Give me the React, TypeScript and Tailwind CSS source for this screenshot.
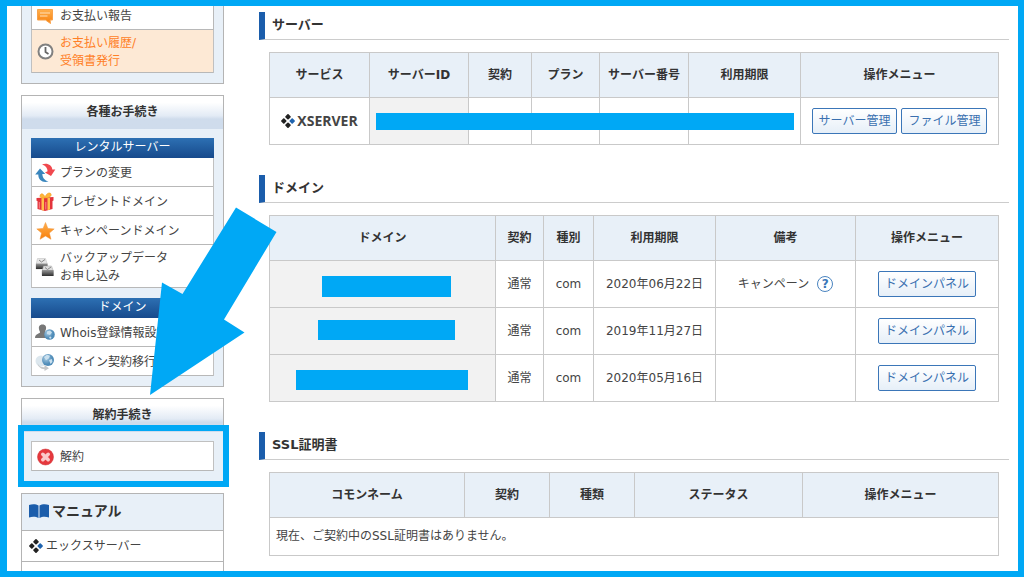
import type { ReactNode } from "react";

type IconName = "speech" | "clock" | "refresh" | "gift" | "star" | "backup" | "whois" | "transfer" | "cancel";

type MenuItem = { icon: IconName; lines: string[]; active?: boolean };

const icons: Record<IconName, ReactNode> = {
  speech: (
    <>
      <path d="M1.500 2.500h15v10.500h-2.500l.5 3.500-5-3.500h-8z" fill="url(#orange)" stroke="#f9a24a" strokeWidth="1" strokeLinejoin="round" />
      <path d="M4 6h10M4 9h7.500" stroke="#ffe0b8" strokeWidth="1" />
    </>
  ),
  clock: (
    <>
      <circle cx="9.500" cy="8.500" r="7" fill="#fff" stroke="#808080" strokeWidth="2" />
      <path d="M9.500 4v5l3 2" fill="none" stroke="#666" strokeWidth="1.800" />
    </>
  ),
  refresh: (
    <>
      <path d="M6 .5C11-1.500 16 1 16.300 5.500H19.300L15 12 9 8.500l2.600-1.300C11.500 4 9.500 1.700 6 .5z" fill="#f0484e" />
      <path d="M12.500 17.500C7 19 2.300 16.500 2.300 10.500H-.8L4 4.500 9.300 10H6.300C6.500 13.500 8.500 16.500 12.500 17.500z" fill="#3a86bd" />
    </>
  ),
  gift: (
    <>
      <path d="M.5 5 17.500 4v3.500l-1 .5v8L9 18 1.500 16V8l-1-.3z" fill="#e3343c" />
      <path d="M5.500 5H8v12.700l-2.500-.6zM11.500 5h2.500v11.500l-2.500.7z" fill="#ffc04a" />
      <path d="M9 5C5 5.500 3 4 4.500 1.500 6-.5 8.500 2 9 4.500c.8-3.500 4-5.500 5.700-4C16.500 3 13 5 9 5z" fill="#ffb638" stroke="#f19a22" strokeWidth=".6" />
      <path d="M3.300 9v6.500M9.800 9v7.500" stroke="#f7868b" strokeWidth="1" />
    </>
  ),
  star: (
    <path d="m9.500.5 2.400 5.900 6.300.5-4.800 4.200 1.600 6.200-5.500-3.300L4 17.300l1.600-6.200L.8 6.900l6.300-.5z" fill="url(#orange)" stroke="#f1953a" strokeWidth=".5" />
  ),
  backup: (
    <>
      <path d="M1.500.5h8l2 6.500v4H0V7z" fill="#e6e6e6" stroke="#bbb" strokeWidth=".5" />
      <path d="M0 5.500h11.500V11H0z" fill="url(#metal)" />
      <path d="M7.500 8h8l2 5.500v4H6v-4z" fill="#dcdcdc" stroke="#a5a5a5" strokeWidth=".5" />
      <path d="M6 12h11.500v6H6z" fill="url(#metal)" />
      <path d="m3 2 2.500 2L9 1.500M9 9.500l2.500 2 3.500-2.500" fill="none" stroke="#888" strokeWidth="1" />
    </>
  ),
  whois: (
    <>
      <path d="M6.500.5c3 0 4 2.200 3.500 4.500-.3 1.500-1 2.200-1 3.500 1 1.300 3.500 1.300 4 5.500H-1C-.8 9.800 3 9.800 4 8.500 4 7.200 3 6.500 3 5 2.500 2.700 3.500.5 6.500.5z" fill="#777" />
      <circle cx="13.500" cy="10.500" r="5.300" fill="url(#globe)" />
      <path d="m11 7.500 3-1 2 2-2 2.500-3-1zM13 13l2-.5.500 1.500-1.500 1z" fill="#c9e0ef" />
    </>
  ),
  transfer: (
    <>
      <circle cx="5" cy="8" r="5.500" fill="#dce7ee" />
      <circle cx="12" cy="7" r="6" fill="url(#globe)" />
      <path d="m8 4 3-2.200 3 1-1 2.500-3 2zM13 7l3-1 .5 3-2 2z" fill="#c9e0ef" />
      <path d="M1.500 10c1 3 3.500 4.500 7 4.300V12l4.500 3.200L8.500 18v-1.700C4.500 16 2 13.500 1.500 10z" fill="#c4c7c9" />
    </>
  ),
  cancel: (
    <>
      <circle cx="9.500" cy="9" r="8" fill="#e5383d" stroke="#cf3237" strokeWidth=".5" />
      <path d="m6.800 6.300 5.400 5.400m0-5.400-5.400 5.400" stroke="#fbc9c9" strokeWidth="3.600" strokeLinecap="round" />
    </>
  ),
};

function Diamonds() {
  return (
    <svg viewBox="0 0 14 14" className="size-[14px] shrink-0" aria-hidden="true">
      <g strokeWidth="1.700" strokeLinejoin="round">
        <path d="m7 .9 1.900 1.900L7 4.700 5.100 2.800zM2.800 5.100 4.700 7 2.800 8.900.9 7zM7 9.300l1.900 1.900L7 13.100l-1.900-1.900z" fill="#222" stroke="#222" />
        <path d="M11.200 5.100 13.100 7l-1.900 1.900L9.300 7z" fill="#1f63ae" stroke="#1f63ae" />
      </g>
    </svg>
  );
}

function MenuList({ items, bordered = false }: { items: MenuItem[]; bordered?: boolean }) {
  return (
    <ul className={`border-x border-[#c0c0c0] bg-white ${bordered ? "border-t" : ""}`}>
      {items.map((item) => (
        <li key={item.lines[0]} className="border-b border-[#b8b8b8]">
          <a
            href="#"
            className={`flex items-center gap-[6px] px-1 ${item.lines.length > 1 ? "pt-1 pb-[2px]" : "pt-[6px] pb-1"} ${
              item.active ? "bg-[#fde9d5] text-[#ff7f27]" : ""
            }`}
          >
            <svg viewBox="0 0 18 18" className="size-[18px] shrink-0 overflow-visible" aria-hidden="true">
              {icons[item.icon]}
            </svg>
            <span>
              {item.lines.map((line) => (
                <span key={line} className="block whitespace-nowrap">
                  {line}
                </span>
              ))}
            </span>
          </a>
        </li>
      ))}
    </ul>
  );
}

function PanelTitle({ children }: { children: ReactNode }) {
  return (
    <h2 className="bg-linear-to-b from-white from-20% via-[#e3ebf5] via-60% to-[#cfdcec] to-70% pt-[7px] pb-2 text-center font-bold text-[#333]">
      {children}
    </h2>
  );
}

function GroupTitle({ children }: { children: ReactNode }) {
  return (
    <h3 className="bg-linear-to-b from-[#2d70b3] to-[#174a8c] pb-[2px] text-center text-white">{children}</h3>
  );
}

function Section({ title, children }: { title: string; children: ReactNode }) {
  return (
    <section>
      <h2 className="border-b border-l-6 border-[#ccc] border-l-[#1b5dab] pt-1 pb-[5px] pl-[7px] text-[13px] font-bold text-[#333]">
        {title}
      </h2>
      <div className="relative mx-[10px] mt-3">{children}</div>
    </section>
  );
}

function Table({ label, heads, children }: { label: string; heads: [string, string][]; children: ReactNode }) {
  return (
    <table aria-label={label} className="w-full table-fixed border-collapse text-center">
      <thead>
        <tr className="bg-[#e8f0f8] text-[#333]">
          {heads.map(([text, width]) => (
            <th key={text} className={`border border-[#c9c9c9] py-[13px] font-bold ${width}`}>
              {text}
            </th>
          ))}
        </tr>
      </thead>
      <tbody>{children}</tbody>
    </table>
  );
}

function Td({ children, className = "" }: { children?: ReactNode; className?: string }) {
  return <td className={`border border-[#c9c9c9] py-[10px] ${className}`}>{children}</td>;
}

function Button({ children }: { children: ReactNode }) {
  return (
    <button
      type="button"
      className="rounded-[2px] border border-[#3b76b8] bg-linear-to-b from-white to-[#e6eff8] px-[6px] py-[3px] text-[#3a70b0]"
    >
      {children}
    </button>
  );
}

const serverHeads: [string, string][] = [
  ["サービス", "w-[100px]"],
  ["サーバーID", "w-[99px]"],
  ["契約", "w-[63px]"],
  ["プラン", "w-[68px]"],
  ["サーバー番号", "w-[89px]"],
  ["利用期限", "w-[112px]"],
  ["操作メニュー", ""],
];

const domainHeads: [string, string][] = [
  ["ドメイン", "w-[226px]"],
  ["契約", "w-[48px]"],
  ["種別", "w-[50px]"],
  ["利用期限", "w-[122px]"],
  ["備考", "w-[140px]"],
  ["操作メニュー", ""],
];

const sslHeads: [string, string][] = [
  ["コモンネーム", "w-[195px]"],
  ["契約", "w-[85px]"],
  ["種類", "w-[85px]"],
  ["ステータス", "w-[168px]"],
  ["操作メニュー", ""],
];

const domains = [
  { limit: "2020年06月22日", note: "キャンペーン" },
  { limit: "2019年11月27日", note: "" },
  { limit: "2020年05月16日", note: "" },
];

function Sidebar() {
  return (
    <aside className="relative ml-[14px] flex w-[203px] shrink-0 flex-col gap-[11px]">
      <div className="border border-t-0 border-[#b4b4b4] bg-[#e8f0f8] px-[9px] pb-[10px]">
        <div className="border-x border-b border-[#b8b8b8] bg-white">
          <a href="#" className="flex items-center gap-[6px] px-1 pt-px pb-1">
            <svg viewBox="0 0 18 18" className="size-[18px] shrink-0" aria-hidden="true">
              {icons.speech}
            </svg>
            お支払い報告
          </a>
        </div>
        <MenuList items={[{ icon: "clock", lines: ["お支払い履歴/", "受領書発行"], active: true }]} />
      </div>

      <div className="border border-[#b4b4b4] bg-[#e8f0f8]">
        <PanelTitle>各種お手続き</PanelTitle>
        <div className="flex flex-col gap-[10px] px-[9px] pt-[9px] pb-[10px]">
          <div>
            <GroupTitle>レンタルサーバー</GroupTitle>
            <MenuList
              items={[
                { icon: "refresh", lines: ["プランの変更"] },
                { icon: "gift", lines: ["プレゼントドメイン"] },
                { icon: "star", lines: ["キャンペーンドメイン"] },
                { icon: "backup", lines: ["バックアップデータ", "お申し込み"] },
              ]}
            />
          </div>
          <div>
            <GroupTitle>ドメイン</GroupTitle>
            <MenuList
              items={[
                { icon: "whois", lines: ["Whois登録情報設定"] },
                { icon: "transfer", lines: ["ドメイン契約移行"] },
              ]}
            />
          </div>
        </div>
      </div>

      <div className="relative border border-[#b4b4b4] bg-[#e8f0f8]">
        <PanelTitle>解約手続き</PanelTitle>
        <div className="px-[9px] pt-[9px] pb-[10px]">
          <MenuList bordered items={[{ icon: "cancel", lines: ["解約"] }]} />
        </div>
        <div className="pointer-events-none absolute top-[26px] -right-[6px] -bottom-[6px] -left-1 border-6 border-[#00a8f5]" />
      </div>

      <div className="flex flex-1 flex-col border-x border-t border-[#b4b4b4]">
        <h2 className="flex items-center gap-[3px] border-b border-[#b4b4b4] bg-[#e8f0f8] px-[7px] pt-2 pb-[10px] text-[14px] font-bold text-[#333]">
          <svg viewBox="0 0 20 14" className="h-[14px] w-[20px]" aria-hidden="true">
            <path d="M0 1c3-1 7-1 9.500.5V14C7 12.500 3 12.500 0 13.500zM20 1c-3-1-7-1-9.500.5V14c2.500-1.500 6.500-1.500 9.500-.5z" fill="#1b5dab" />
          </svg>
          マニュアル
        </h2>
        <a href="#" className="flex items-center gap-[3px] border-b border-[#b4b4b4] px-[7px] py-[6px]">
          <Diamonds />
          エックスサーバー
        </a>
      </div>

      <svg
        viewBox="0 0 130 190"
        className="pointer-events-none absolute top-[200px] left-[128px] z-10 h-[190px] w-[130px]"
        aria-hidden="true"
      >
        <path d="M1 189 13 76.500 33.500 88 87 1.500 127.500 26 75 113.500 95.500 126.500Z" fill="#00a8f5" />
      </svg>
    </aside>
  );
}

export default function App() {
  return (
    <div className="flex min-h-screen border-6 border-l-7 border-[#00a8f5] bg-white font-['DejaVu_Sans','Noto_Sans_CJK_JP',sans-serif] text-[12px] leading-[18px] text-[#444]">
      <svg className="absolute size-0" aria-hidden="true">
        <defs>
          <linearGradient id="orange" x1="0" y1="0" x2="0" y2="1">
            <stop offset="0" stopColor="#ffb04d" />
            <stop offset="1" stopColor="#f77f0c" />
          </linearGradient>
          <linearGradient id="metal" x1="0" y1="0" x2="0" y2="1">
            <stop offset="0" stopColor="#999" />
            <stop offset="1" stopColor="#2e2e2e" />
          </linearGradient>
          <radialGradient id="globe" cx=".35" cy=".35">
            <stop offset="0" stopColor="#a9cbe2" />
            <stop offset="1" stopColor="#4f8cb8" />
          </radialGradient>
        </defs>
      </svg>
      <Sidebar />
      <main className="mr-[9px] ml-[35px] flex min-w-0 flex-1 flex-col gap-[30px] pt-[6px]">
        <Section title="サーバー">
          <Table label="サーバー" heads={serverHeads}>
            <tr>
              <Td>
                <span className="flex items-center justify-center gap-[2px] font-['Open_Sans',sans-serif] text-[14px] font-bold">
                  <Diamonds />
                  XSERVER
                </span>
              </Td>
              <Td className="bg-[#f2f2f2]" />
              <Td />
              <Td />
              <Td />
              <Td />
              <Td>
                <span className="flex justify-center gap-1">
                  <Button>サーバー管理</Button>
                  <Button>ファイル管理</Button>
                </span>
              </Td>
            </tr>
          </Table>
          <div className="absolute top-[61px] left-[107px] h-[17px] w-[418px] bg-[#00a8f5]" />
        </Section>

        <Section title="ドメイン">
          <Table label="ドメイン" heads={domainHeads}>
            {domains.map((d) => (
              <tr key={d.limit}>
                <Td className="bg-[#f2f2f2]" />
                <Td>通常</Td>
                <Td>com</Td>
                <Td>{d.limit}</Td>
                <Td>
                  {d.note && (
                    <span className="flex items-center justify-center gap-2">
                      {d.note}
                      <a
                        href="#"
                        className="size-4 rounded-full border border-[#4a84c0] text-center text-[12px] leading-[14px] font-bold text-[#3a76b8]"
                      >
                        ?
                      </a>
                    </span>
                  )}
                </Td>
                <Td>
                  <Button>ドメインパネル</Button>
                </Td>
              </tr>
            ))}
          </Table>
          <div className="absolute top-[61px] left-[53px] h-[21px] w-[129px] bg-[#00a8f5]" />
          <div className="absolute top-[105px] left-[49px] h-[20px] w-[137px] bg-[#00a8f5]" />
          <div className="absolute top-[155px] left-[27px] h-[20px] w-[172px] bg-[#00a8f5]" />
        </Section>

        <Section title="SSL証明書">
          <Table label="SSL証明書" heads={sslHeads}>
            <tr>
              <td colSpan={5} className="border border-[#c9c9c9] px-[6px] pt-[9px] pb-[10px] text-left">
                現在、ご契約中のSSL証明書はありません。
              </td>
            </tr>
          </Table>
        </Section>
      </main>
    </div>
  );
}
